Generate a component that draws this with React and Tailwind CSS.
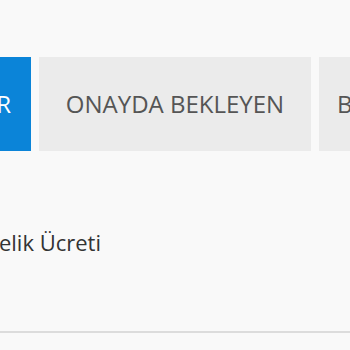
export default function App() {
  return (
    <div
      className="w-[350px] h-[350px] overflow-hidden bg-[#f9f9f9]"
      style={{ fontFamily: '"Open Sans", sans-serif' }}
    >
      {/* Tabs */}
      <div className="flex gap-2 pt-[57px] whitespace-nowrap">
        <div className="w-[31px] h-[94px] shrink-0 flex items-center justify-end pr-5 bg-[#0b84d8] text-white text-[24px]">
          ONAYLANANLAR
        </div>
        <div className="w-[272px] h-[94px] shrink-0 flex items-center justify-center bg-[#ebebeb] text-[#555] text-[24px]">
          ONAYDA BEKLEYEN
        </div>
        <div className="w-[200px] h-[94px] shrink-0 flex items-center pl-[18px] bg-[#ebebeb] text-[#555] text-[24px]">
          BAŞARISIZ
        </div>
      </div>

      {/* Row */}
      <div className="flex justify-end w-[101px] whitespace-nowrap mt-[76px] text-[22px] text-[#333] leading-[30px]">
        Üyelik Ücreti
      </div>
      <div className="mt-[74px] h-[2px] bg-[#dcdcdc]" />
    </div>
  );
}
